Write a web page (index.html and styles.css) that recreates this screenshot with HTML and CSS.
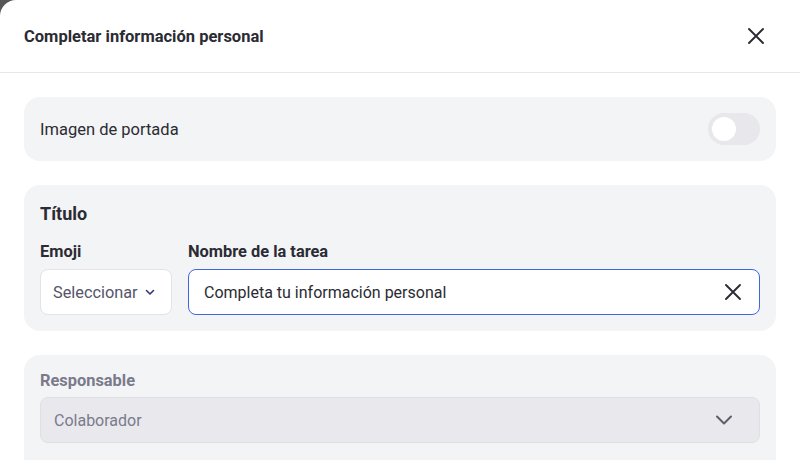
FILE: index.html
```html
<!DOCTYPE html>
<html lang="es">
<head>
    <meta charset="UTF-8">
    <title>Completar información personal</title>
    <link rel="stylesheet" href="styles.css">
</head>
<body>
    <div class="modal">
        <div class="modal-header">
            <h2>Completar información personal</h2>
            <button class="icon-btn close" aria-label="Cerrar">
                <svg width="18" height="18" viewBox="0 0 18 18"><path d="M2 2L16 16M16 2L2 16" stroke="#2b2b33" stroke-width="1.9" stroke-linecap="round"/></svg>
            </button>
        </div>

        <div class="modal-body">
            <div class="card row">
                <span class="card-text">Imagen de portada</span>
                <span class="toggle"><span class="knob"></span></span>
            </div>

            <div class="card">
                <h3>Título</h3>
                <div class="fields">
                    <div class="field emoji">
                        <label>Emoji</label>
                        <div class="select">
                            <span>Seleccionar</span>
                            <svg width="10" height="10" viewBox="0 0 10 10"><path d="M1.5 3.5L5 7L8.5 3.5" fill="none" stroke="#34347a" stroke-width="1.6" stroke-linecap="round" stroke-linejoin="round"/></svg>
                        </div>
                    </div>
                    <div class="field grow">
                        <label>Nombre de la tarea</label>
                        <div class="input focused">
                            <span>Completa tu información personal</span>
                            <svg width="18" height="18" viewBox="0 0 18 18"><path d="M2 2L16 16M16 2L2 16" stroke="#2b2b33" stroke-width="1.9" stroke-linecap="round"/></svg>
                        </div>
                    </div>
                </div>
            </div>

            <div class="card last">
                <label class="muted">Responsable</label>
                <div class="input disabled">
                    <span>Colaborador</span>
                    <svg width="18" height="18" viewBox="0 0 18 18"><path d="M2 5.5L9 12.5L16 5.5" fill="none" stroke="#5d5d6b" stroke-width="2" stroke-linecap="round" stroke-linejoin="round"/></svg>
                </div>
            </div>
        </div>
    </div>
</body>
</html>
```

FILE: styles.css
```css
body {
    margin: 0;
    background-color: #575757;
    font-family: Roboto, "Liberation Sans", sans-serif;
    color: #2b2b33;
    overflow: hidden;
}

.modal {
    background-color: white;
    border-top-left-radius: 16px;
    height: 460px;
}

.modal-header {
    height: 72px;
    border-bottom: 1px solid #e8e8ec;
    display: flex;
    align-items: center;
    justify-content: space-between;
    padding: 0 35px 0 24px;
}

.modal-header h2 {
    margin: 0;
    font-size: 16.5px;
    font-weight: 700;
}

.icon-btn {
    background: none;
    border: none;
    padding: 0;
    display: flex;
    cursor: pointer;
}

.modal-body {
    padding: 24px;
    display: flex;
    flex-direction: column;
    gap: 24px;
}

.card {
    background-color: #f3f4f6;
    border-radius: 16px;
    padding: 16px;
}

.card.last {
    padding-bottom: 40px;
}

.card.row {
    display: flex;
    align-items: center;
    justify-content: space-between;
    height: 32px;
}

.card-text {
    font-size: 16.5px;
}

.toggle {
    width: 52px;
    height: 32px;
    border-radius: 16px;
    background-color: #e7e7ec;
    display: flex;
    align-items: center;
    padding: 0 4px;
    box-sizing: border-box;
}

.knob {
    width: 24px;
    height: 24px;
    border-radius: 50%;
    background-color: white;
}

.card h3 {
    margin: 0 0 14px;
    font-size: 18px;
    font-weight: 700;
    line-height: 26px;
}

.fields {
    display: flex;
    gap: 16px;
}

.field {
    display: flex;
    flex-direction: column;
}

.field.grow {
    flex: 1;
}

label {
    font-size: 16.4px;
    font-weight: 700;
    line-height: 22px;
    margin-bottom: 6px;
    display: block;
}

label.muted {
    color: #7a7a8c;
    line-height: 20px;
    margin-bottom: 6px;
}

.select, .input {
    height: 46px;
    box-sizing: border-box;
    border: 1px solid #e2e2e8;
    border-radius: 8px;
    background-color: white;
    display: flex;
    align-items: center;
    font-size: 16px;
}

.select {
    width: 132px;
    padding: 0 12px;
    gap: 7px;
    font-size: 16.3px;
    color: #55556a;
}

.input {
    justify-content: space-between;
    padding: 0 17px 0 15px;
}

.input.focused {
    border-color: #3f66e0;
}

.input.disabled {
    background-color: #e8e8ed;
    border-color: #dedee4;
    color: #7a7a8c;
    padding-left: 13px;
    padding-right: 26px;
}
```
